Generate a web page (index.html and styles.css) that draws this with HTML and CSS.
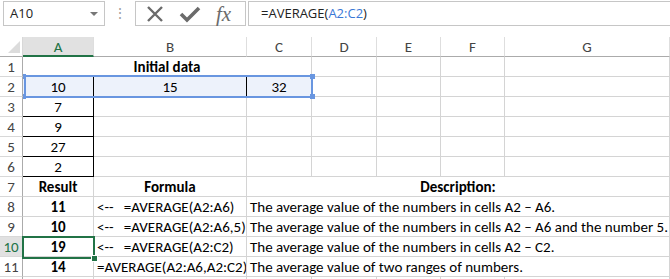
FILE: index.html
```html
<!DOCTYPE html>
<html lang="en">

<head>
    <meta charset="UTF-8">
    <meta name="viewport" content="width=device-width, initial-scale=1.0">
    <title>AVERAGE</title>
    <link rel="stylesheet" href="styles.css">
</head>

<body>
    <div class="bar">
        <div class="namebox">A10<span class="drop"></span></div>
        <div class="grip">&#8942;</div>
        <div class="buttons">
            <svg class="icon" width="20" height="18" viewBox="0 0 20 18">
                <path d="M3 2 L17 16 M17 2 L3 16" stroke="#6b6b6b" stroke-width="2.4" fill="none" />
            </svg>
            <svg class="icon" width="22" height="18" viewBox="0 0 22 18">
                <path d="M2 9 L8 15 L20 3" stroke="#6b6b6b" stroke-width="3.6" fill="none" stroke-linejoin="miter" />
            </svg>
            <span class="fx">fx</span>
        </div>
        <div class="formula">=AVERAGE(<span class="ref">A2:C2</span>)</div>
    </div>

    <div class="sheet">
        <!-- header -->
        <div class="corner"><span class="tri"></span></div>
        <div class="hd on">A</div>
        <div class="hd">B</div>
        <div class="hd">C</div>
        <div class="hd">D</div>
        <div class="hd">E</div>
        <div class="hd">F</div>
        <div class="hd">G</div>

        <!-- 1 -->
        <div class="rh">1</div>
        <div class="c b span3 bb">Initial data</div>
        <div class="c"></div><div class="c"></div><div class="c"></div><div class="c"></div>

        <!-- 2 -->
        <div class="rh">2</div>
        <div class="c ctr blk sel">10</div>
        <div class="c ctr br sel">15</div>
        <div class="c ctr sel">32</div>
        <div class="c"></div><div class="c"></div><div class="c"></div><div class="c"></div>

        <!-- 3-6 -->
        <div class="rh">3</div>
        <div class="c ctr blk">7</div>
        <div class="c"></div><div class="c"></div><div class="c"></div><div class="c"></div><div class="c"></div><div class="c"></div>
        <div class="rh">4</div>
        <div class="c ctr blk">9</div>
        <div class="c"></div><div class="c"></div><div class="c"></div><div class="c"></div><div class="c"></div><div class="c"></div>
        <div class="rh">5</div>
        <div class="c ctr blk">27</div>
        <div class="c"></div><div class="c"></div><div class="c"></div><div class="c"></div><div class="c"></div><div class="c"></div>
        <div class="rh">6</div>
        <div class="c ctr blk">2</div>
        <div class="c"></div><div class="c"></div><div class="c"></div><div class="c"></div><div class="c"></div><div class="c"></div>

        <!-- 7 -->
        <div class="rh">7</div>
        <div class="c b">Result</div>
        <div class="c b">Formula</div>
        <div class="c b span5">Description:</div>

        <div class="rh">8</div>
        <div class="c b">11</div>
        <div class="c l">&lt;--&nbsp;&nbsp; =AVERAGE(A2:A6)</div>
        <div class="c l span5">The average value of the numbers in cells A2 – A6.</div>

        <div class="rh">9</div>
        <div class="c b">10</div>
        <div class="c l">&lt;--&nbsp;&nbsp; =AVERAGE(A2:A6,5)</div>
        <div class="c l span5">The average value of the numbers in cells A2 – A6 and the number 5.</div>

        <div class="rh on">10</div>
        <div class="c b">19</div>
        <div class="c l">&lt;--&nbsp;&nbsp; =AVERAGE(A2:C2)</div>
        <div class="c l span5">The average value of the numbers in cells A2 – C2.</div>

        <div class="rh">11</div>
        <div class="c b">14</div>
        <div class="c l">=AVERAGE(A2:A6,A2:C2)</div>
        <div class="c l span5">The average value of two ranges of numbers.</div>

        <div class="rh"></div>
        <div class="c"></div><div class="c"></div><div class="c"></div><div class="c"></div><div class="c"></div><div class="c"></div><div class="c"></div>

        <!-- selections drawn over the grid -->
        <div class="range">
            <i class="h tl"></i><i class="h tr"></i><i class="h bl"></i><i class="h br2"></i>
        </div>
        <div class="active"><i class="fill"></i></div>
    </div>
</body>

</html>
```

FILE: styles.css
```css
* {
    margin: 0;
    padding: 0;
    box-sizing: border-box;
}

body {
    width: 670px;
    height: 279px;
    overflow: hidden;
    background: #fff;
    font-family: Carlito, Lato, "Liberation Sans", sans-serif;
    color: #000;
}

/* formula bar */

.bar {
    display: flex;
    height: 25px;
    margin: 1px 0 11px 3px;
    font-family: "Open Sans", "Noto Sans", sans-serif;
    font-size: 13px;
    color: #222;
}

.namebox {
    position: relative;
    width: 102px;
    border: 1px solid #c6c6c6;
    padding-left: 6px;
    line-height: 23px;
}

.drop {
    position: absolute;
    right: 6px;
    top: 10px;
    border-left: 4px solid transparent;
    border-right: 4px solid transparent;
    border-top: 4px solid #777;
}

.grip {
    width: 30px;
    text-align: center;
    color: #a0a0a0;
    line-height: 23px;
    font-size: 14px;
}

.buttons {
    width: 111px;
    border: 1px solid #c6c6c6;
    display: flex;
    align-items: center;
    padding-left: 9px;
    gap: 14px;
}

.fx {
    font-family: "Liberation Serif", serif;
    font-style: italic;
    font-size: 21px;
    color: #6b6b6b;
    line-height: 22px;
    margin-left: 1px;
}

.formula {
    flex: 1;
    margin-left: 2px;
    border: 1px solid #c6c6c6;
    border-right: none;
    padding-left: 12px;
    line-height: 23px;
}

.ref {
    color: #3a78d6;
}

/* grid */

.sheet {
    position: relative;
    display: grid;
    grid-template-columns: 23px 71px 153px 65px 65px 64px 64px minmax(0, 1fr);
    grid-auto-rows: 20px;
    font-size: 15px;
}

.corner {
    position: relative;
    border-right: 1px solid #d8d8d8;
    border-bottom: 1px solid #ababab;
}

.tri {
    position: absolute;
    right: 2px;
    bottom: 3px;
    border-left: 12px solid transparent;
    border-bottom: 12px solid #dcdcdc;
}

.hd {
    text-align: center;
    line-height: 19px;
    padding-top: 1px;
    color: #444;
    border-right: 1px solid #dedede;
    border-bottom: 1px solid #ababab;
}

.hd:last-of-type {
    border-right: none;
}

.hd.on {
    background: #e1e1e1;
    color: #217346;
    border-bottom: 2px solid #217346;
}

.rh {
    text-align: center;
    line-height: 19px;
    padding-top: 1px;
    color: #444;
    border-right: 1px solid #ababab;
    border-bottom: 1px solid #d8d8d8;
}

.rh.on {
    background: #e1e1e1;
    color: #217346;
}

.c {
    border-right: 1px solid #d4d4d4;
    border-bottom: 1px solid #d4d4d4;
    line-height: 19px;
    padding-top: 1px;
    white-space: nowrap;
    overflow: hidden;
}

.ctr,
.b {
    text-align: center;
}

.b {
    font-weight: bold;
}

.l {
    padding-left: 3px;
}

.span3 {
    grid-column: span 3;
}

.span5 {
    grid-column: span 5;
}

.bb {
    border-bottom-color: #000;
}

.blk {
    border-right-color: #000;
    border-bottom-color: #000;
}

.br {
    border-right-color: #000;
}

.sel {
    background: #edf2fb;
}

.range {
    position: absolute;
    left: 24px;
    top: 38px;
    width: 289px;
    height: 23px;
    border: 2px solid #6996e0;
}

.h {
    position: absolute;
    width: 5px;
    height: 5px;
    background: #6996e0;
}

.tl { left: -3px; top: -3px; width: 3px; }
.bl { left: -3px; bottom: -3px; width: 3px; }
.tr { right: -4px; top: -3px; }
.br2 { right: -4px; bottom: -3px; }

.active {
    position: absolute;
    left: 22px;
    top: 199px;
    width: 73px;
    height: 23px;
    border: 2px solid #217346;
}

.fill {
    position: absolute;
    right: -5px;
    bottom: -5px;
    width: 7px;
    height: 7px;
    background: #217346;
    border: 1px solid #fff;
}
```
